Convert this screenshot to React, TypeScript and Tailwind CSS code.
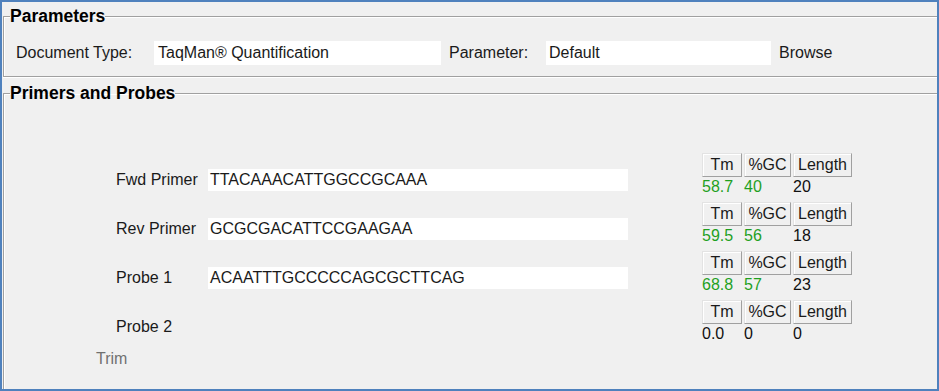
const sequences = [
  { label: 'Fwd Primer', seq: 'TTACAAACATTGGCCGCAAA', tm: '58.7', gc: '40', len: '20', ok: true },
  { label: 'Rev Primer', seq: 'GCGCGACATTCCGAAGAA', tm: '59.5', gc: '56', len: '18', ok: true },
  { label: 'Probe 1', seq: 'ACAATTTGCCCCCAGCGCTTCAG', tm: '68.8', gc: '57', len: '23', ok: true },
  { label: 'Probe 2', seq: null, tm: '0.0', gc: '0', len: '0', ok: false },
];

function HeaderCell({ text, width }: { text: string; width: string }) {
  return (
    <div
      className={`${width} h-[24px] flex items-center justify-center border border-t-[#e3e3e3] border-l-[#e3e3e3] border-b-[#a0a0a0] border-r-[#a0a0a0] shadow-[inset_1px_1px_0_#fff]`}
    >
      {text}
    </div>
  );
}

function StatsBlock({ tm, gc, len, ok }: { tm: string; gc: string; len: string; ok: boolean }) {
  const valueColor = ok ? 'text-[#1fa01f]' : 'text-[#111]';
  return (
    <div className="flex flex-col">
      <div className="flex gap-[2px]">
        <HeaderCell text="Tm" width="w-[40px]" />
        <HeaderCell text="%GC" width="w-[47px]" />
        <HeaderCell text="Length" width="w-[59px]" />
      </div>
      <div className="flex h-[20px] items-center">
        <span className={`w-[42px] ${valueColor}`}>{tm}</span>
        <span className={`w-[49px] ${valueColor}`}>{gc}</span>
        <span className="text-[#111]">{len}</span>
      </div>
    </div>
  );
}

export default function App() {
  return (
    <div
      className="w-[939px] h-[391px] overflow-hidden border-2 border-[#4f81bd] bg-[#f0f0f0] text-[16px] leading-[20px] text-[#1a1a1a]"
      style={{ fontFamily: '"Liberation Sans", Arial, sans-serif' }}
    >
      <fieldset className="ml-px mt-[4px] border-t border-l border-b border-[#a0a0a0] shadow-[inset_1px_1px_0_#fff,0_1px_0_#fff] pt-[15px] pb-[11px]">
        <legend className="ml-[6px] font-bold text-[17.5px] leading-[20px] text-black">Parameters</legend>
        <div className="flex items-center h-[24px] pl-[12px]">
          <span className="w-[138px]">Document Type:</span>
          <div className="w-[287px] h-[24px] bg-white flex items-center pl-[4px]">TaqMan® Quantification</div>
          <span className="ml-[8px] w-[97px]">Parameter:</span>
          <div className="w-[225px] h-[24px] bg-white flex items-center pl-[3px]">Default</div>
          <span className="ml-[8px]">Browse</span>
        </div>
      </fieldset>

      <fieldset className="ml-px mt-[6px] h-[320px] border-t border-l border-[#a0a0a0] shadow-[inset_1px_1px_0_#fff] pt-[50px]">
        <legend className="ml-[6px] font-bold text-[17.5px] leading-[20px] text-black">Primers and Probes</legend>
        <div className="flex flex-col gap-[5px]">
          {sequences.map((s) => (
            <div key={s.label} className="flex items-start">
              <div className="flex items-center mt-[16px] h-[22px] pl-[112px] w-[698px]">
                <span className="w-[92px]">{s.label}</span>
                {s.seq && (
                  <div className="w-[420px] h-[22px] bg-white flex items-center pl-[2px]">{s.seq}</div>
                )}
              </div>
              <StatsBlock tm={s.tm} gc={s.gc} len={s.len} ok={s.ok} />
            </div>
          ))}
        </div>
        <div className="pl-[92px] mt-[5px] text-[#707070]">Trim</div>
      </fieldset>
    </div>
  );
}
